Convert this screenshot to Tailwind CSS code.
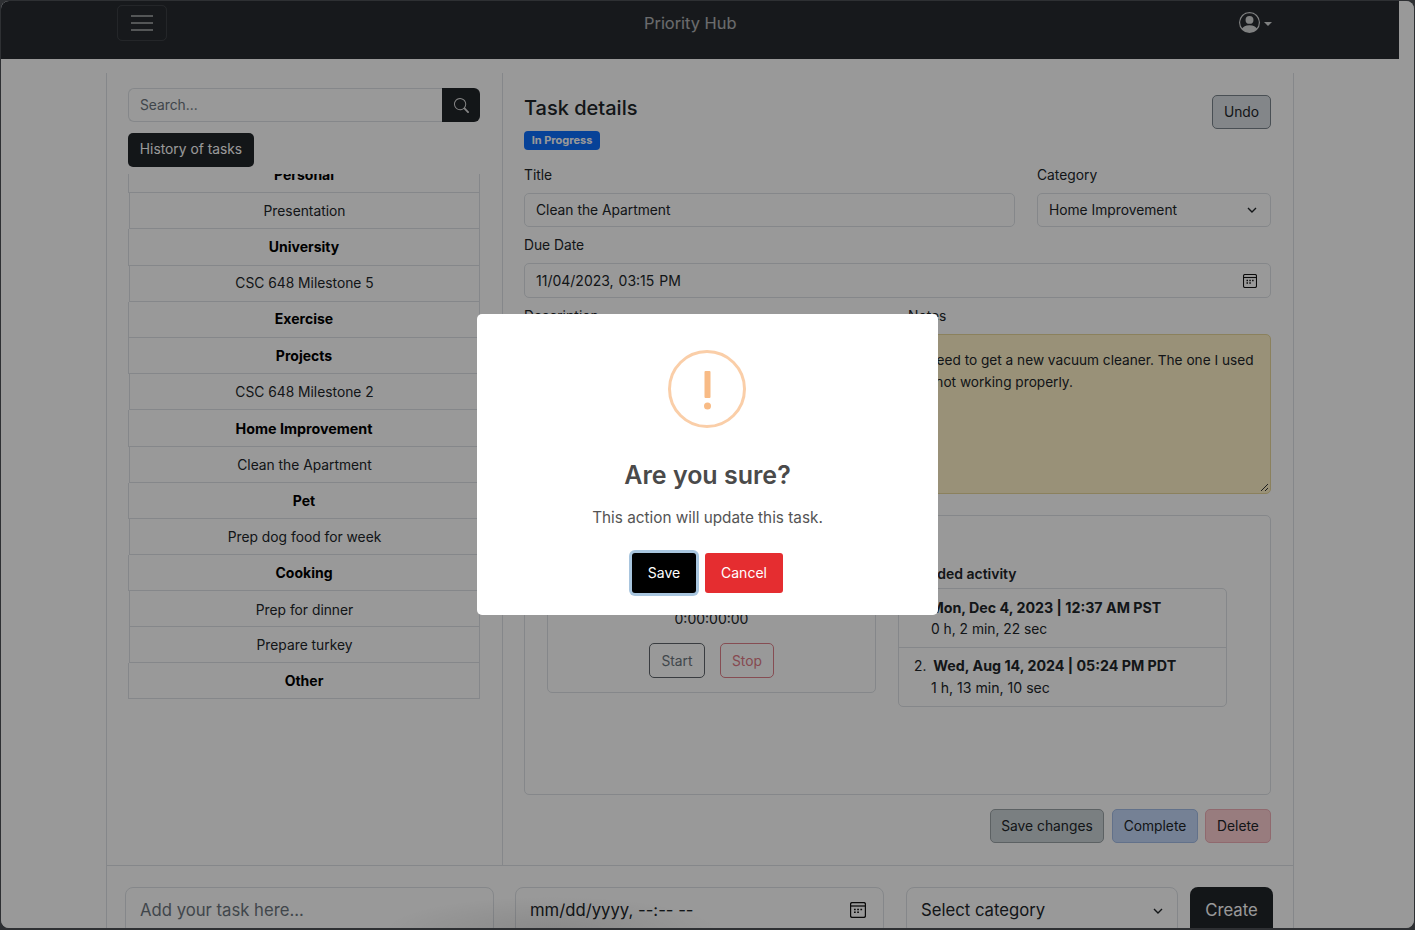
<!DOCTYPE html>
<html lang="en">

<head>
    <meta charset="UTF-8">
    <meta name="viewport" content="width=device-width, initial-scale=1.0">
    <title>Priority Hub</title>
    <script src="https://cdn.jsdelivr.net/npm/@tailwindcss/browser@4"></script>
</head>

<body class="h-[930px] w-[1415px] overflow-hidden bg-[#2e3033] p-px font-['Inter',sans-serif] text-[13.8px] text-[#212529]">
    <div class="relative h-[927px] w-[1413px] overflow-hidden rounded-[8px] bg-white">
        <div class="w-[1398px]">
            <!-- navbar -->
            <nav class="relative flex h-[58px] items-start bg-[#272b30]">
                <button class="ml-[116px] mt-[4px] flex h-[36px] w-[50px] items-center justify-center rounded-[5px] border border-white/10">
                    <svg width="24" height="18" viewBox="0 0 24 18" fill="none" stroke="#8c8f91" stroke-width="2"><path d="M1 2h22M1 9h22M1 16h22" /></svg>
                </button>
                <span class="absolute left-[643px] top-[10px] text-[16.4px] leading-[24px] text-white/65">Priority Hub</span>
                <div class="absolute left-[1238px] top-[11px] flex items-center gap-[4px]">
                    <svg width="21" height="21" viewBox="0 0 16 16" fill="#d6d7d8"><path d="M11 6a3 3 0 1 1-6 0 3 3 0 0 1 6 0z" /><path fill-rule="evenodd" d="M0 8a8 8 0 1 1 16 0A8 8 0 0 1 0 8zm8-7a7 7 0 0 0-5.468 11.37C3.242 11.226 4.805 10 8 10s4.757 1.225 5.468 2.37A7 7 0 0 0 8 1z" /></svg>
                    <span class="mt-[3px] h-0 w-0 border-x-[4px] border-t-[4px] border-x-transparent border-t-[#d6d7d8]"></span>
                </div>
            </nav>

            <main class="ml-[105px] mt-[14px] w-[1188px] border-x border-[#dee2e6]">
                <div class="flex h-[793px] border-b border-[#dee2e6]">
                    <!-- left column -->
                    <aside class="w-[396px] border-r border-[#dee2e6] pl-[21px] pr-[22px] pt-[15px]">
                        <div class="flex h-[34px]">
                            <input placeholder="Search..." class="h-full w-[314px] rounded-l-[6px] border border-r-0 border-[#dee2e6] px-[11px] pb-px placeholder:text-[#6c757d]">
                            <div class="flex w-[38px] items-center justify-center rounded-r-[6px] bg-[#212529]">
                                <svg width="15" height="15" viewBox="0 0 16 16" fill="#dcdcdc"><path d="M11.742 10.344a6.5 6.5 0 1 0-1.397 1.398h-.001c.03.04.062.078.098.115l3.85 3.85a1 1 0 0 0 1.415-1.414l-3.85-3.85a1.007 1.007 0 0 0-.115-.1zM12 6.5a5.5 5.5 0 1 1-11 0 5.5 5.5 0 0 1 11 0z" /></svg>
                            </div>
                        </div>
                        <button class="mt-[11px] block h-[34px] w-[126px] rounded-[5px] bg-[#212529] pb-[0.5px] text-white">History of tasks</button>
                        <div class="mt-[7px] h-[526px] overflow-hidden text-center">
                            <div class="-mt-[17px] flex h-[36.2px] items-center justify-center border border-t-0 border-[#dee2e6] text-[14px] font-bold text-black">Personal</div>
                            <div class="ml-px flex h-[36.2px] items-center justify-center border-r border-b border-l border-[#dee2e6] pt-px">Presentation</div>
                            <div class="flex h-[36.2px] items-center justify-center border-x border-b border-[#dee2e6] text-[14px] font-bold text-black">University</div>
                            <div class="ml-px flex h-[36.2px] items-center justify-center border-x border-b border-[#dee2e6]">CSC 648 Milestone 5</div>
                            <div class="flex h-[36.2px] items-center justify-center border-x border-b border-[#dee2e6] pb-[2px] text-[14px] font-bold text-black">Exercise</div>
                            <div class="flex h-[36.2px] items-center justify-center border-x border-b border-[#dee2e6] text-[14px] font-bold text-black">Projects</div>
                            <div class="ml-px flex h-[36.2px] items-center justify-center border-x border-b border-[#dee2e6] pt-px">CSC 648 Milestone 2</div>
                            <div class="flex h-[36.2px] items-center justify-center border-x border-b border-[#dee2e6] pt-px text-[14.3px] font-bold text-black">Home Improvement</div>
                            <div class="ml-px flex h-[36.2px] items-center justify-center border-x border-b border-[#dee2e6] pt-[2px]">Clean the Apartment</div>
                            <div class="flex h-[36.2px] items-center justify-center border-x border-b border-[#dee2e6] text-[14px] font-bold text-black">Pet</div>
                            <div class="ml-px flex h-[36.2px] items-center justify-center border-x border-b border-[#dee2e6] pt-px">Prep dog food for week</div>
                            <div class="flex h-[36.2px] items-center justify-center border-x border-b border-[#dee2e6] text-[14px] font-bold text-black">Cooking</div>
                            <div class="ml-px flex h-[36.2px] items-center justify-center border-x border-b border-[#dee2e6] pt-[2px]">Prep for dinner</div>
                            <div class="ml-px flex h-[35.2px] items-center justify-center border-x border-b border-[#dee2e6] pt-px">Prepare turkey</div>
                            <div class="flex h-[36.2px] items-center justify-center border-x border-b border-[#dee2e6] text-[14px] font-bold text-black">Other</div>
                        </div>
                    </aside>

                    <!-- task details -->
                    <section class="w-[790px] pl-[21px] pr-[22px]">
                        <div class="flex justify-between pt-[22px]">
                            <div>
                                <h2 class="text-[20px] leading-[26px] font-medium">Task details</h2>
                                <span class="mt-[10px] block h-[19px] w-[76px] rounded-[4px] bg-[#0d6efd] text-center text-[11px] leading-[19px] font-bold text-white">In Progress</span>
                            </div>
                            <button class="h-[34px] w-[59px] rounded-[5px] border border-[#7b848c] bg-[#dae0e4] pt-[0.5px]">Undo</button>
                        </div>
                        <div class="mt-[15px] flex gap-[22px]">
                            <div class="w-[491px]">
                                <label class="block leading-[21px]">Title</label>
                                <input value="Clean the Apartment" class="mt-[7px] h-[34px] w-full rounded-[5px] border border-[#dee2e6] px-[11px] pb-px">
                            </div>
                            <div class="w-[234px]">
                                <label class="block leading-[21px]">Category</label>
                                <div class="mt-[7px] flex h-[34px] items-center justify-between rounded-[5px] border border-[#dee2e6] pl-[11px] pr-[13px]">
                                    <span>Home Improvement</span>
                                    <svg width="10" height="6" viewBox="0 0 10 6" fill="none" stroke="#212529" stroke-width="1.4"><path d="M1 1l4 4 4-4" /></svg>
                                </div>
                            </div>
                        </div>
                        <label class="mt-[8px] block leading-[21px]">Due Date</label>
                        <div class="mt-[7px] flex h-[35px] items-center justify-between rounded-[5px] border border-[#dee2e6] pl-[11px] pr-[13px]">
                            <span class="text-[14px] [word-spacing:1px]">11/04/2023, 03:15 PM</span>
                            <svg width="14" height="14" viewBox="0 0 14 14" fill="none" stroke="#111" stroke-width="1.1"><rect x="0.5" y="0.5" width="13" height="13" rx="1.5" /><path d="M0.5 3.5h13" /><path d="M3.5 6.5h1.5M6.3 6.5h1.5M9.1 6.5h1.5M3.5 9h1.5M6.3 9h1.5" stroke-width="1.3" /></svg>
                        </div>
                        <div class="mt-[8px] flex gap-[22px]">
                            <div class="w-[362px]">
                                <label class="block leading-[21px]">Description</label>
                                <div class="mt-[7px] h-[160px] rounded-[5px] border border-[#dee2e6]"></div>
                            </div>
                            <div class="w-[363px]">
                                <label class="block leading-[21px]">Notes</label>
                                <div class="relative mt-[7px] h-[160px] rounded-[5px] border border-[#e8d89c] bg-[#fff2c8] px-[12px] py-[14px] text-[13.65px] leading-[22px]">I need to get a new vacuum cleaner. The one I used is not working properly.
                                    <svg class="absolute bottom-[1px] right-[1px]" width="9" height="9" viewBox="0 0 9 9" fill="none" stroke="#333" stroke-width="1"><path d="M1 8l7-7M5 8l3-3" /></svg>
                                </div>
                            </div>
                        </div>

                        <!-- time tracking -->
                        <div class="mt-[21px] flex h-[280px] gap-[22px] rounded-[5px] border border-[#dee2e6] px-[22px] pt-[47px]">
                            <div class="mt-[3px] h-[127px] w-[329px] self-start rounded-[5px] border border-[#dee2e6] text-center">
                                <p class="mt-[41px] text-[14px] leading-[21px]">0:00:00:00</p>
                                <div class="mt-[14px] flex justify-center gap-[15px]">
                                    <button class="h-[35px] w-[56px] rounded-[5px] border border-[#5f656b] pt-px text-[#6c757d]">Start</button>
                                    <button class="h-[35px] w-[54px] rounded-[5px] border border-[#e0808a] pt-px text-[#e07a85]">Stop</button>
                                </div>
                            </div>
                            <div class="w-[329px]">
                                <h3 class="font-semibold leading-[21px] text-[14px]">Recorded activity</h3>
                                <ol class="mt-[4px] rounded-[5px] border border-[#dee2e6]">
                                    <li class="h-[59px] border-b border-[#dee2e6] pl-[15px] pt-[8px] leading-[22px]"><span>1.</span> <b class="ml-[3px] text-[14.25px] font-bold">Mon, Dec 4, 2023 | 12:37 AM PST</b><p class="-mt-px pl-[17px]">0 h, 2 min, 22 sec</p></li>
                                    <li class="h-[58px] pl-[15px] pt-[7px] leading-[22px]"><span>2.</span> <b class="ml-[3px] text-[14.25px] font-bold">Wed, Aug 14, 2024 | 05:24 PM PDT</b><p class="pl-[17px] text-[14.1px]">1 h, 13 min, 10 sec</p></li>
                                </ol>
                            </div>
                        </div>

                        <div class="mt-[14px] flex justify-end">
                            <button class="h-[34px] w-[114px] rounded-[5px] border border-[#9aa2a6] bg-[#ccd4d8]">Save changes</button>
                            <button class="ml-[8px] h-[34px] w-[86px] rounded-[5px] border border-[#a3bce6] bg-[#c4d8f8]">Complete</button>
                            <button class="ml-[7px] h-[34px] w-[66px] rounded-[5px] border border-[#f0b0b8] bg-[#fdcfd3]">Delete</button>
                        </div>
                    </section>
                </div>

                <!-- new task row -->
                <div class="flex pl-[18px] pt-[21px] text-[16.7px]">
                    <input placeholder="Add your task here..." class="h-[48px] w-[369px] rounded-[8px] border border-[#dee2e6] px-[14px] pb-[2px] placeholder:text-[#6c757d]">
                    <div class="ml-[21px] flex h-[48px] w-[369px] items-center justify-between rounded-[8px] border border-[#dee2e6] pl-[14px] pr-[17px]">
                        <span>mm/dd/yyyy, --:-- --</span>
                        <svg class="mb-[3px]" width="16" height="16" viewBox="0 0 14 14" fill="none" stroke="#111" stroke-width="1.1"><rect x="0.5" y="0.5" width="13" height="13" rx="1.5" /><path d="M0.5 3.5h13" /><path d="M3.5 6.5h1.5M6.3 6.5h1.5M9.1 6.5h1.5M3.5 9h1.5M6.3 9h1.5" stroke-width="1.3" /></svg>
                    </div>
                    <div class="ml-[22px] flex h-[48px] w-[272px] items-center justify-between rounded-[8px] border border-[#dee2e6] pl-[14px] pr-[14px]">
                        <span>Select category</span>
                        <svg width="10" height="6" viewBox="0 0 10 6" fill="none" stroke="#212529" stroke-width="1.4"><path d="M1 1l4 4 4-4" /></svg>
                    </div>
                    <button class="ml-[12px] h-[48px] w-[83px] rounded-[8px] bg-[#212529] text-white">Create</button>
                </div>
            </main>
        </div>

        <!-- confirm dialog backdrop -->
        <div class="absolute inset-0 bg-black/40"></div>
        <div class="absolute left-[380px] top-[895px] h-[70px] w-[340px] bg-[radial-gradient(ellipse_at_center,rgba(0,0,0,0.1),transparent_70%)]"></div>
        <div class="absolute left-[476px] top-[313px] h-[301px] w-[461px] rounded-[5px] bg-white text-center">
            <svg class="ml-[191px] mt-[36px] block" width="78" height="78" viewBox="0 0 78 78" fill="none">
                <circle cx="39" cy="39" r="37.5" stroke="#facea8" stroke-width="3" />
                <rect x="36.5" y="21" width="6" height="27" rx="1" fill="#f8bb86" />
                <circle cx="39.5" cy="56" r="3.5" fill="#f8bb86" />
            </svg>
            <h2 class="mt-[29px] text-[25px] leading-[36px] font-semibold text-[#4a4a4a]">Are you sure?</h2>
            <p class="mt-[14px] text-[15.3px] leading-[22px] text-[#545454]">This action will update this task.</p>
            <div class="mt-[24px] flex justify-center gap-[9px]">
                <button class="h-[40px] w-[64px] rounded-[3px] bg-black pb-[2px] text-[14px] text-white ring-[3px] ring-[#a8c5de]">Save</button>
                <button class="h-[40px] w-[78px] rounded-[3px] bg-[#e52d30] pb-[2px] text-[14px] text-white">Cancel</button>
            </div>
        </div>
    </div>
</body>

</html>
